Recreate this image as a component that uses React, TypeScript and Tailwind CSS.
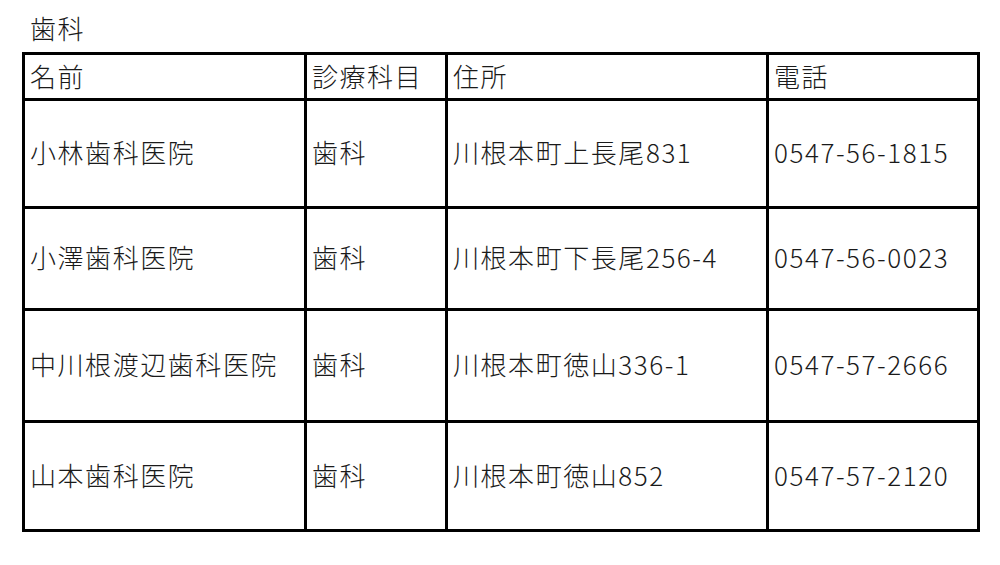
const rows = [
  { name: "小林歯科医院", dept: "歯科", addr: "川根本町上長尾831", tel: "0547-56-1815", h: "h-[108px]" },
  { name: "小澤歯科医院", dept: "歯科", addr: "川根本町下長尾256-4", tel: "0547-56-0023", h: "h-[102px]" },
  { name: "中川根渡辺歯科医院", dept: "歯科", addr: "川根本町徳山336-1", tel: "0547-57-2666", h: "h-[112px]" },
  { name: "山本歯科医院", dept: "歯科", addr: "川根本町徳山852", tel: "0547-57-2120", h: "h-[109px]" },
];

const cell = "border-[3px] border-black pl-[5px] align-middle text-left font-light";

export default function App() {
  return (
    <div
      className="w-[1000px] h-[565px] bg-white text-[#1a1a1a] text-[26px] leading-none tracking-[0.06em] font-light"
      style={{ fontFamily: '"Noto Sans CJK JP", "Noto Sans", sans-serif' }}
    >
      <div className="pl-[30px] pt-[15px] h-[52px]">歯科</div>
      <table className="ml-[22px] w-[955px] table-fixed border-collapse">
        <colgroup>
          <col className="w-[282px]" />
          <col className="w-[141px]" />
          <col className="w-[321px]" />
          <col className="w-[211px]" />
        </colgroup>
        <thead>
          <tr className="h-[46px]">
            <th className={`${cell} pb-[2px]`}>名前</th>
            <th className={`${cell} pb-[2px]`}>診療科目</th>
            <th className={`${cell} pb-[2px]`}>住所</th>
            <th className={`${cell} pb-[2px]`}>電話</th>
          </tr>
        </thead>
        <tbody>
          {rows.map((r) => (
            <tr key={r.name} className={r.h}>
              <td className={`${cell} pb-[3px]`}>{r.name}</td>
              <td className={`${cell} pb-[3px]`}>{r.dept}</td>
              <td className={`${cell} pb-[3px]`}>{r.addr}</td>
              <td className={`${cell} pb-[3px]`}>{r.tel}</td>
            </tr>
          ))}
        </tbody>
      </table>
    </div>
  );
}
